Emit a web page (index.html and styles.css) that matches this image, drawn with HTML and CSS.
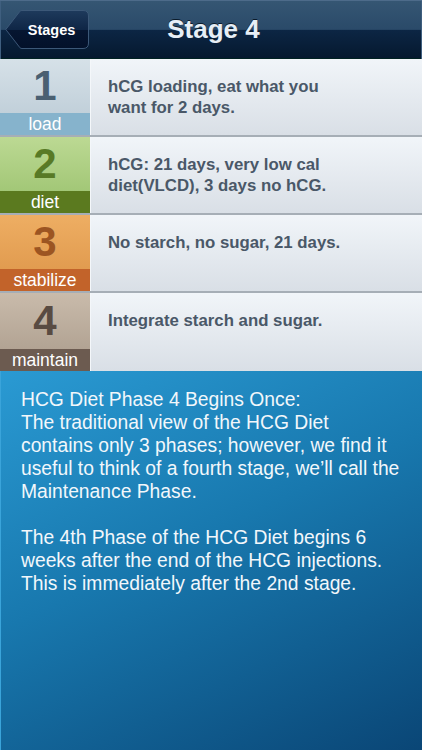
FILE: index.html
```html
<!DOCTYPE html>
<html lang="en">
<head>
    <meta charset="UTF-8">
    <meta name="viewport" content="width=device-width, initial-scale=1.0">
    <title>Stage 4</title>
    <link rel="stylesheet" href="styles.css">
</head>
<body>
    <div class="app">
        <header class="nav-bar">
            <a class="back-btn" href="#">
                <svg class="back-shape" viewBox="0 0 84 39" preserveAspectRatio="none">
                    <defs>
                        <linearGradient id="backFill" x1="0" y1="0" x2="0" y2="1">
                            <stop offset="0" stop-color="#1e3a5c"/>
                            <stop offset="0.5" stop-color="#0f2646"/>
                            <stop offset="0.52" stop-color="#061631"/>
                            <stop offset="1" stop-color="#03112a"/>
                        </linearGradient>
                    </defs>
                    <path d="M0.8 19.5 L15 1.2 Q15.6 0.5 17 0.5 L78 0.5 Q83.5 0.5 83.5 6 L83.5 33 Q83.5 38.5 78 38.5 L17 38.5 Q15.6 38.5 15 37.8 Z" fill="url(#backFill)" stroke="#3c5878" stroke-width="1"/>
                </svg>
                <span class="back-label">Stages</span>
            </a>
            <h1 class="nav-title">Stage 4</h1>
            <span></span>
        </header>

        <ul class="stage-list">
            <li class="stage stage-load">
                <div class="tile">
                    <span class="tile-num">1</span>
                    <span class="tile-label">load</span>
                </div>
                <p class="stage-text">hCG loading, eat what you want for 2 days.</p>
            </li>
            <li class="stage stage-diet">
                <div class="tile">
                    <span class="tile-num">2</span>
                    <span class="tile-label">diet</span>
                </div>
                <p class="stage-text">hCG: 21 days, very low cal diet(VLCD), 3 days no hCG.</p>
            </li>
            <li class="stage stage-stabilize">
                <div class="tile">
                    <span class="tile-num">3</span>
                    <span class="tile-label">stabilize</span>
                </div>
                <p class="stage-text">No starch, no sugar, 21 days.</p>
            </li>
            <li class="stage stage-maintain">
                <div class="tile">
                    <span class="tile-num">4</span>
                    <span class="tile-label">maintain</span>
                </div>
                <p class="stage-text">Integrate starch and sugar.</p>
            </li>
        </ul>

        <section class="info">
            <p>HCG Diet Phase 4 Begins Once:<br>
            The traditional view of the HCG Diet contains only 3 phases; however, we find it useful to think of a fourth stage, we’ll call the Maintenance Phase.</p>
            <p>The 4th Phase of the HCG Diet begins 6 weeks after the end of the HCG injections. This is immediately after the 2nd stage.</p>
        </section>
    </div>
</body>
</html>
```

FILE: styles.css
```css
body {
    margin: 0;
    padding: 0;
    font-family: "Liberation Sans", Arial, sans-serif;
    background: #0a4676;
}

.app {
    width: 422px;
    height: 750px;
    display: flex;
    flex-direction: column;
    overflow: hidden;
}

/* top bar */
.nav-bar {
    height: 59px;
    box-sizing: border-box;
    display: grid;
    grid-template-columns: 1fr auto 1fr;
    align-items: center;
    padding: 0 0 1px 5px;
    border-top: 1px solid #4d6b8a;
    background: linear-gradient(to bottom, #355673 0%, #2a4a69 49%, #0c2644 50%, #05182e 100%);
    box-shadow: inset 1px 0 0 #3f5f7f, inset -1px 0 0 #3f5f7f, inset 0 -1px 0 #022;
}

.back-btn {
    position: relative;
    justify-self: start;
    display: flex;
    align-items: center;
    justify-content: center;
    width: 84px;
    height: 39px;
    box-sizing: border-box;
    padding-left: 9px;
    text-decoration: none;
}

.back-shape {
    position: absolute;
    left: 0;
    top: 0;
    width: 100%;
    height: 100%;
}

.back-label {
    position: relative;
    color: #fff;
    font-size: 14.5px;
    font-weight: bold;
}

.nav-title {
    margin: 0;
    color: #e6eef6;
    font-size: 26px;
    font-weight: bold;
    text-shadow: 0 -1px 0 #0a1a2a;
}

/* stage rows */
.stage-list {
    list-style: none;
    margin: 0;
    padding: 0;
}

.stage {
    display: flex;
    height: 78px;
    box-sizing: border-box;
    border-bottom: 2px solid #a6aeb6;
}

.stage:last-child {
    border-bottom: none;
}

.tile {
    width: 90px;
    display: flex;
    flex-direction: column;
    border-right: 1px solid #f4f7fa;
}

.tile-num {
    flex: 1;
    display: flex;
    align-items: center;
    justify-content: center;
    font-size: 42px;
    font-weight: bold;
}

.tile-label {
    height: 22px;
    line-height: 22px;
    text-align: center;
    color: #fff;
    font-size: 17.5px;
}

.stage-load .tile { background: linear-gradient(#d6e1e8, #b9c9d4); }
.stage-load .tile-num { color: #4a6072; }
.stage-load .tile-label { background: #86b3cc; }

.stage-diet .tile { background: linear-gradient(#bcd993, #98c06c); }
.stage-diet .tile-num { color: #587a26; }
.stage-diet .tile-label { background: #5b7a1f; }

.stage-stabilize .tile { background: linear-gradient(#eeae63, #dc9448); }
.stage-stabilize .tile-num { color: #9c5522; }
.stage-stabilize .tile-label { background: #c2632a; }

.stage-maintain .tile { background: linear-gradient(#c9bbab, #a99a8a); }
.stage-maintain .tile-num { color: #594b42; }
.stage-maintain .tile-label { background: #6c5b50; }

.stage-text {
    flex: 1;
    margin: 0;
    padding: 17px 70px 0 17px;
    background: linear-gradient(#f1f5f9, #d9dfe6);
    color: #4a5868;
    font-size: 16.8px;
    line-height: 21px;
    font-weight: bold;
}

/* info panel */
.info {
    flex: 1;
    padding: 17px 19px 0 21px;
    background: linear-gradient(155deg, #2a9ad3 0%, #1878ae 45%, #0a4676 100%);
    box-shadow: inset 1px 0 0 #3aa4da;
    color: #f2f7fb;
    font-size: 19.3px;
    line-height: 23px;
}

.info p {
    margin: 0 0 23px;
}
```
